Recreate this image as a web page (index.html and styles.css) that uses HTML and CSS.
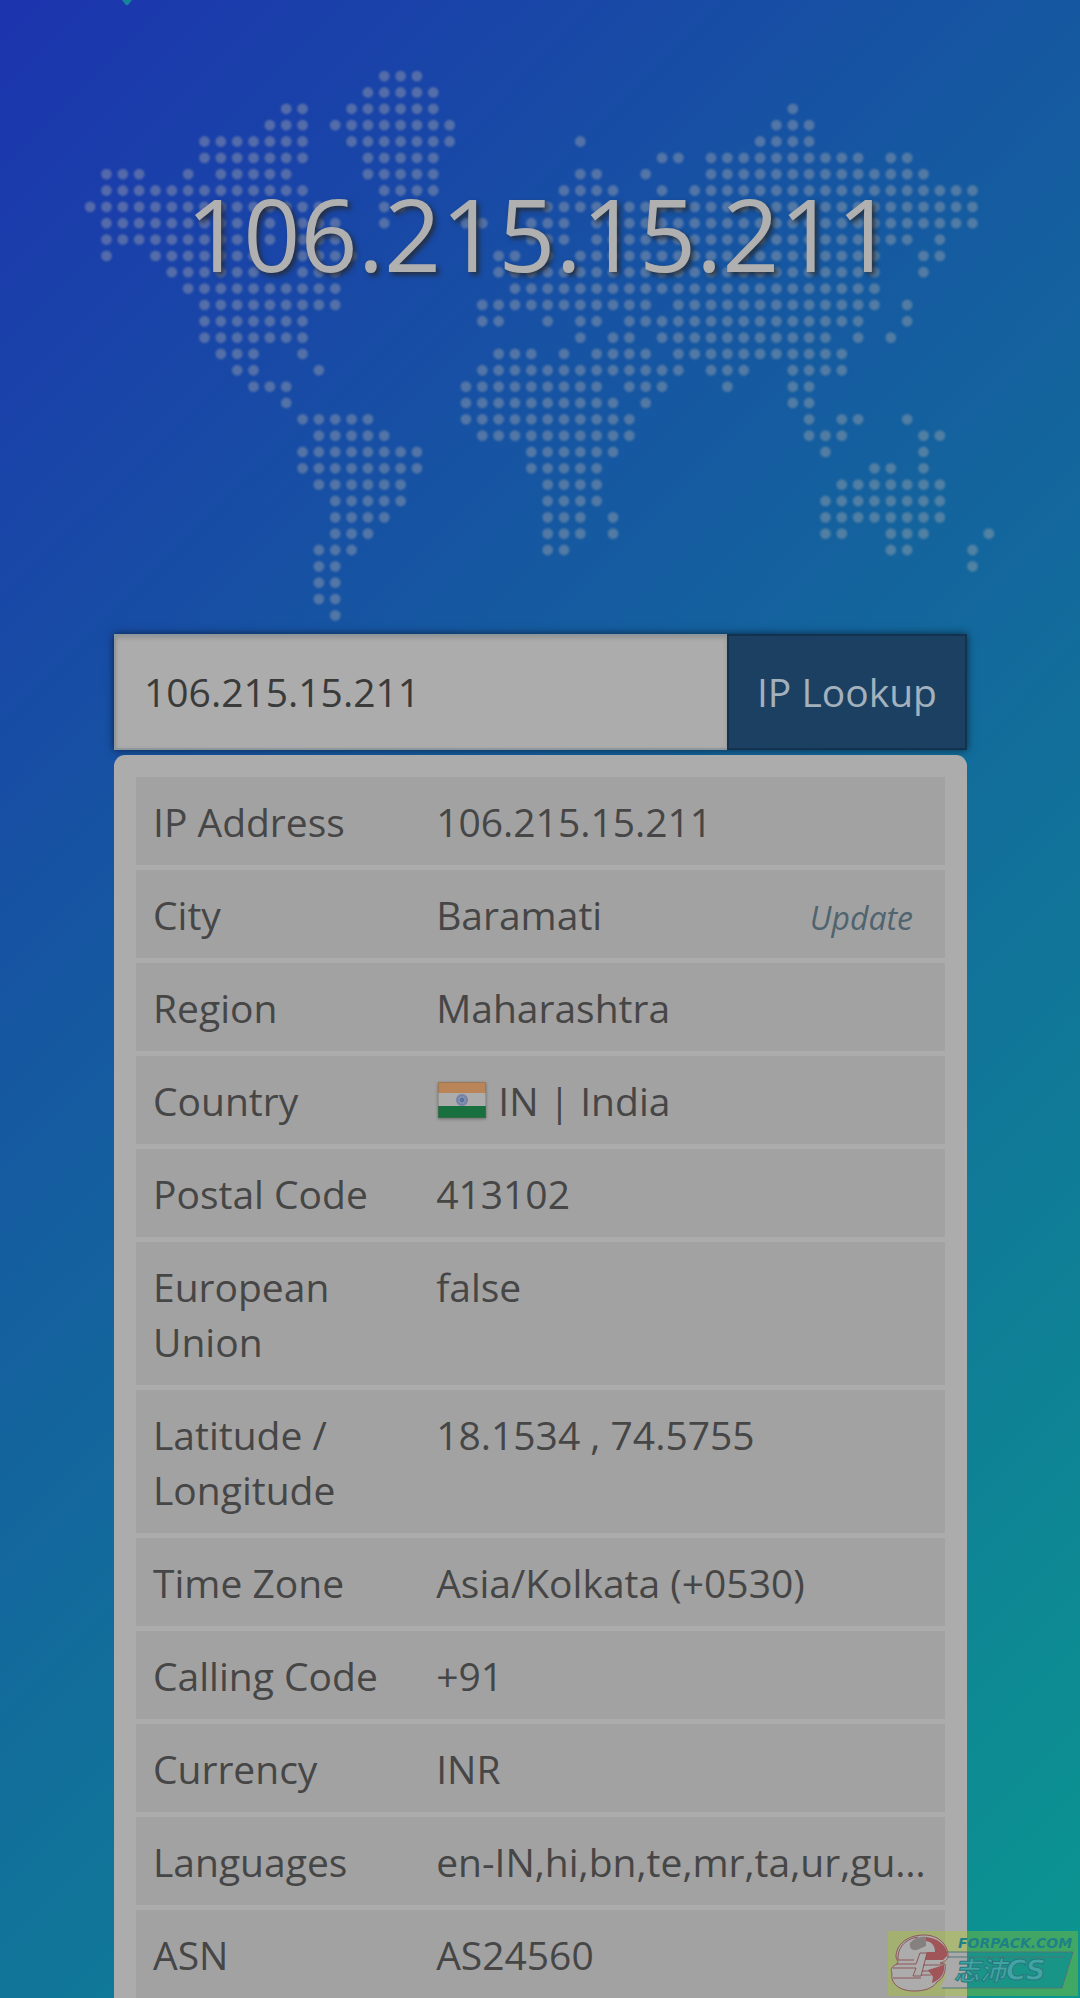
FILE: index.html
```
<!DOCTYPE html>
<html lang="en">
<head>
<meta charset="utf-8">
<meta name="viewport" content="width=device-width, initial-scale=1">
<title>IP Lookup</title>
<link rel="stylesheet" href="styles.css">
</head>
<body>
<svg class="tip" viewBox="0 0 10 6" aria-hidden="true"><path d="M0 0h10L6 5H4z"/></svg>
<header class="hero">
  <svg class="map" viewBox="-5 -6 891 540" aria-hidden="true">
    <g transform="scale(16)">
      <path d="M18 0h2.1M17 1h4.1M12 2h1.1M16 2h5.1M43 2h.1M11 3h2.1M15 3h7.1M42 3h2.1M7 4h6.1M16 4h6.1M30 4h.1M41 4h3.1"/>
      <path d="M7 5h6.1M17 5h4.1M35 5h1.1M38 5h9.1M49 5h1.1M1 6h2.1M6 6h.1M8 6h4.1M17 6h4.1M30 6h1.1M34 6h.1M38 6h13.1"/>
      <path d="M1 7h12.1M18 7h3.1M29 7h3.1M35 7h.1M37 7h17.1M0 8h14.1M18 8h1.1M28 8h26.1"/>
      <path d="M1 9h8.1M11 9h.1M13 9h2.1M18 9h.1M23 9h1.1M27 9h2.1M31 9h23.1M1 10h8.1M11 10h.1M13 10h2.1M27 10h2.1M31 10h19.1M52 10h.1"/>
      <path d="M1 11h.1M4 11h6.1M13 11h3.1M25 11h1.1M28 11h.1M30 11h18.1M51 11h1.1M5 12h5.1M13 12h2.1M25 12h23.1M51 12h.1"/>
      <path d="M6 13h9.1M26 13h22.1M7 14h8.1M24 14h10.1M36 14h12.1M50 14h.1M7 15h6.1M24 15h1.1M28 15h.1M30 15h1.1M33 15h14.1M50 15h.1"/>
      <path d="M7 16h6.1M30 16h.1M32 16h1.1M35 16h10.1M47 16h.1M49 16h.1M8 17h2.1M13 17h.1M25 17h2.1M29 17h.1M31 17h3.1M36 17h10.1"/>
      <path d="M9 18h1.1M14 18h.1M24 18h12.1M38 18h2.1M43 18h3.1M10 19h2.1M23 19h8.1M33 19h2.1M39 19h.1M43 19h1.1"/>
      <path d="M12 20h.1M23 20h9.1M34 20h.1M43 20h1.1M13 21h4.1M23 21h10.1M44 21h.1M46 21h1.1M50 21h.1M14 22h4.1M24 22h9.1M44 22h2.1M51 22h1.1"/>
      <path d="M13 23h7.1M27 23h5.1M45 23h.1M51 23h.1M13 24h7.1M27 24h4.1M48 24h1.1M51 24h.1M14 25h5.1M28 25h3.1M46 25h6.1"/>
      <path d="M15 26h4.1M28 26h3.1M45 26h7.1M15 27h3.1M28 27h2.1M32 27h.1M45 27h7.1M15 28h2.1M28 28h2.1M32 28h.1M45 28h1.1M49 28h2.1M55 28h.1"/>
      <path d="M14 29h2.1M28 29h1.1M49 29h1.1M54 29h.1M14 30h1.1M54 30h.1M14 31h1.1M14 32h1.1M15 33h.1"/>
    </g>
  </svg>
  <h1 class="title">106.215.15.211</h1>
</header>
<main class="content">
  <form class="search">
    <input class="search-input" type="text" value="106.215.15.211" aria-label="IP address">
    <button class="search-button" type="button">IP Lookup</button>
  </form>
  <section class="panel">
    <table class="details">
      <tr><th scope="row">IP Address</th><td>106.215.15.211</td></tr>
      <tr><th scope="row">City</th><td><div class="split"><span>Baramati</span><a class="update" href="#">Update</a></div></td></tr>
      <tr><th scope="row">Region</th><td>Maharashtra</td></tr>
      <tr><th scope="row">Country</th><td><svg class="flag" viewBox="0 0 48 36" aria-hidden="true"><path fill="#b98457" d="M0 0h48v12H0z"/><path fill="#acacac" d="M0 11h48v14H0z"/><path fill="#19703f" d="M0 24h48v12H0z"/><circle cx="24" cy="18" r="5" fill="#8794ac" stroke="#7484a8" stroke-width="2"/><circle cx="24" cy="18" r="2" fill="#465d94"/><path d="M24 13v10M19 18h10M20.500 14.500l7 7M27.500 14.500l-7 7" stroke="#657aa3" stroke-width=".6"/><path d="M.5.5h47v35H.5z" fill="none" stroke="#6d6252" stroke-opacity=".35"/></svg> IN | India</td></tr>
      <tr><th scope="row">Postal Code</th><td>413102</td></tr>
      <tr><th scope="row">European Union</th><td>false</td></tr>
      <tr><th scope="row">Latitude / Longitude</th><td>18.1534 , 74.5755</td></tr>
      <tr><th scope="row">Time Zone</th><td>Asia/Kolkata (+0530)</td></tr>
      <tr><th scope="row">Calling Code</th><td>+91</td></tr>
      <tr><th scope="row">Currency</th><td>INR</td></tr>
      <tr><th scope="row">Languages</th><td>en-IN,hi,bn,te,mr,ta,ur,gu…</td></tr>
      <tr><th scope="row">ASN</th><td>AS24560</td></tr>
    </table>
  </section>
</main>
<svg class="badge" viewBox="0 0 190 65" role="img" aria-label="FORPACK.COM">
  <path fill="#a5cb14" fill-opacity=".35" d="M0 0h190v65H0z"/>
  <path fill="#0c8f93" fill-opacity=".75" d="M79 21h106l-11 36H79z"/>
  <path fill="#aaaaaa" d="M56 21h23v36H52l6-12z"/>
  <path fill="none" stroke="#4f7579" stroke-width="1" d="M58 21h127l-11 36H54M60 26h118"/>
  <path fill="#acacac" stroke="#8d5558" stroke-width="1" d="M8 26C8 13 20 4 36 4c14 0 24 9 24 21 0 4-4 6-8 7l5 1c1 9-2 14-8 18-4 6-12 9-23 9C11 60 2 52 4 42c-2-3 0-7 5-9 2-1 0-4-1-7z"/>
  <path fill="#868080" d="M22 12c5-5 10-7 16-6v9l-9 4c-6 1-8-3-7-7z"/>
  <path fill="#a05558" d="M38 6c11 1 20 8 21 15v4l-4 4H37l2-8h8c0-6-3-10-9-11zM40 39l16-5c1 8-3 14-12 18l1-6z"/>
  <path fill="none" stroke="#8d5558" stroke-width="1" d="M8 33h20l4-11h7l-6 23h-8l3-8H5M10 29h16M30 6C16 8 9 18 10 29M5 47h28M35 34h21M34 40h8M33 44h10"/>
  <text class="badge-site" x="70" y="17">FORPACK.COM</text>
  <text class="badge-name" x="66" y="49">志沛<tspan class="badge-latin">CS</tspan></text>
</svg>
</body>
</html>
```
FILE: styles.css
```
* {
  box-sizing: border-box;
}

body {
  position: relative;
  margin: 0;
  min-height: 100vh;
  background: linear-gradient(135deg, #1c34ae 0%, #155ba0 38%, #0b9690 100%);
  color: #464646;
  font-family: "Open Sans", "Noto Sans", sans-serif;
  font-size: 39px;
  line-height: 55px;
}

.tip {
  position: absolute;
  top: 0;
  left: 122px;
  width: 10px;
  height: 6px;
  fill: #16859a;
}

.hero {
  display: grid;
  justify-items: center;
  padding: 70px 85px 12px;
}

.map {
  grid-area: 1 / 1;
  width: 100%;
  fill: none;
  stroke: #acacac;
  stroke-opacity: .4;
  stroke-width: .66;
  stroke-linecap: round;
  stroke-dasharray: 0 1;
  filter: blur(1px);
}

.title {
  grid-area: 1 / 1;
  z-index: 1;
  margin: 95px 0 0;
  color: #b0b0b0;
  font-size: 100px;
  font-weight: 400;
  line-height: 136px;
  text-shadow: 3px 3px 5px rgba(40, 40, 40, .8);
}

.content {
  margin: 0 113px 0 114px;
}

.search {
  display: flex;
  height: 116px;
  box-shadow: 0 0 8px rgba(0, 0, 0, .6);
}

.search-input,
.search-button {
  margin: 0;
  border-radius: 0;
  font: inherit;
}

.search-input {
  flex: 1;
  min-width: 0;
  padding: 0 28px;
  border: 2px solid #8e979b;
  border-right: 0;
  background: #acacac;
  box-shadow: inset 0 2px 4px rgba(0, 0, 0, .15);
  color: #3a3a3a;
}

.search-button {
  padding: 0 28px;
  border: 2px solid #12324f;
  background: #1b4062;
  color: #a3b1bd;
}

.panel {
  margin-top: 5px;
  padding: 22px 22px 0;
  border-radius: 11px 11px 0 0;
  background: #acacac;
}

.details {
  width: 100%;
  table-layout: fixed;
  border-spacing: 0;
}

.details th,
.details td {
  padding: 17px 16px 16px 17px;
  border-bottom: 5px solid #acacac;
  background: #a2a2a2;
  font-weight: 400;
  text-align: left;
  vertical-align: top;
}

.details th {
  width: 35%;
}

.details td {
  white-space: nowrap;
}

.details tr:last-child > * {
  border-bottom: 0;
}

.split {
  display: flex;
  justify-content: space-between;
  align-items: baseline;
  padding-right: 16px;
}

.update {
  color: #50646f;
  font-size: 32px;
  font-style: italic;
  line-height: 40px;
  text-decoration: none;
}

.flag {
  width: 48px;
  height: 36px;
  margin: 0 2px;
  vertical-align: -2px;
  box-shadow: 0 1px 3px rgba(0, 0, 0, .35);
}

.badge {
  position: absolute;
  right: 2px;
  bottom: 2px;
  width: 190px;
  height: 65px;
}

.badge-site {
  fill: #1d8187;
  font: italic 700 14px "DejaVu Sans", sans-serif;
}

.badge-name {
  fill: #42a5a5;
  stroke: #28777c;
  stroke-width: 1px;
  font: italic 700 26px "Noto Sans CJK SC", sans-serif;
}

.badge-latin {
  font-family: "DejaVu Sans", sans-serif;
  font-size: 28px;
}
```
